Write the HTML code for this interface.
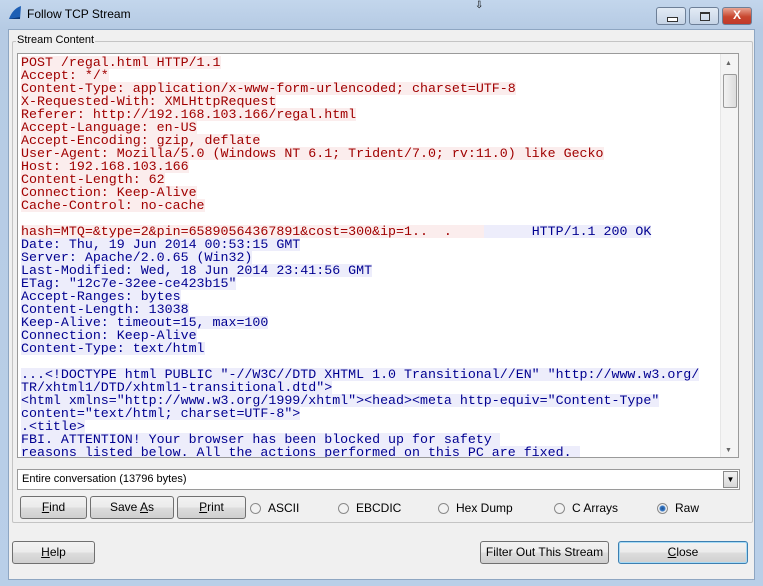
<!DOCTYPE html>
<html><head><style>
body{margin:0;width:763px;height:586px;overflow:hidden;background:#6f97c1;font-family:"Liberation Sans",sans-serif;}
.win{position:absolute;left:0;top:0;width:763px;height:586px;background:linear-gradient(#c3d6ec,#b6cbe4 28px,#b9cfe8);}
.title{position:absolute;left:27px;top:7px;font-size:12px;color:#000;}
.client{position:absolute;left:8px;top:29px;width:745px;height:549px;background:#f0f0f0;border:1px solid #8ea6c2;}
.grp{position:absolute;left:12px;top:41px;width:739px;height:480px;border:1px solid #c4c4c4;border-radius:2px;}
.grplbl{position:absolute;left:16px;top:34px;background:#f0f0f0;font-size:11px;padding:0 1px;}
.text{position:absolute;left:17px;top:53px;width:722px;height:405px;background:#fff;border:1px solid #9a9a9a;box-sizing:border-box;overflow:hidden;}
.lines{position:absolute;left:3px;top:2px;font-family:"Liberation Mono",monospace;font-size:13.3px;line-height:13px;}
.lines div{height:13px;white-space:nowrap;}
.lines span{white-space:pre;}
.r span{background:#fbeded;color:#a00000;display:inline-block;height:13px;}
.b span{background:#ededfb;color:#000090;display:inline-block;height:13px;}
.sb{position:absolute;right:0;top:0;width:17px;height:403px;background:#f4f4f4;border-left:1px solid #e6e6e6;}
.thumb{position:absolute;left:2px;top:20px;width:12px;height:32px;border:1px solid #9a9a9a;border-radius:2px;background:linear-gradient(90deg,#f2f2f2,#dcdcdc);}
.btn{position:absolute;height:23px;border:1px solid #707070;border-radius:3px;background:linear-gradient(#f2f2f2,#ebebeb 50%,#dddddd 51%,#cfcfcf);box-sizing:border-box;font-size:12px;text-align:center;line-height:21px;color:#000;}
.radio{position:absolute;font-size:12px;top:501px;}
.radio i{display:inline-block;width:11px;height:11px;border:1px solid #8a8a8a;border-radius:50%;background:#f2f2f2;vertical-align:-2px;margin-right:7px;box-sizing:border-box;position:relative;}
.combo{position:absolute;left:17px;top:469px;width:723px;height:21px;border:1px solid #9a9a9a;background:#fff;box-sizing:border-box;font-size:11px;line-height:19px;padding-left:4px;}
.cb{position:absolute;right:1px;top:1px;width:15px;height:17px;border:1px solid #8a8a8a;background:linear-gradient(#f2f2f2,#d8d8d8);box-sizing:border-box;font-size:8px;text-align:center;line-height:15px;}
.tb{position:absolute;top:7px;height:18px;border:1px solid #6d7f97;border-radius:3px;box-sizing:border-box;}
</style></head><body>
<div class="win">
<svg style="position:absolute;left:7px;top:5px" width="16" height="16"><path d="M2 14 C4 8 8 3 14 1 L13 14 Z" fill="#1e5fb4"/><path d="M2 14 L13 14 L13 12 Z" fill="#0d3a7a"/></svg>
<div class="title">Follow TCP Stream</div>
<div style="position:absolute;left:475px;top:0;font-size:10px;">⇩</div>
<div class="tb" style="left:656px;width:30px;background:linear-gradient(#e3ebf5,#c6d4e6);"><div style="position:absolute;left:10px;top:9px;width:9px;height:3px;border:1px solid #333;background:#fff;"></div></div>
<div class="tb" style="left:689px;width:30px;background:linear-gradient(#e3ebf5,#c6d4e6);"><div style="position:absolute;left:10px;top:4px;width:8px;height:6px;border:1px solid #333;border-top-width:2px;"></div></div>
<div class="tb" style="left:722px;width:30px;background:linear-gradient(#e8a493,#c8462e 55%,#c0392b);color:#fff;font-weight:bold;font-size:12px;text-align:center;line-height:15px;">X</div>
<div class="client"></div>
<div class="grp"></div>
<div class="grplbl">Stream Content</div>
<div class="text">
<div class="lines">
<div class="r"><span>POST /regal.html HTTP/1.1</span></div>
<div class="r"><span>Accept: */*</span></div>
<div class="r"><span>Content-Type: application/x-www-form-urlencoded; charset=UTF-8</span></div>
<div class="r"><span>X-Requested-With: XMLHttpRequest</span></div>
<div class="r"><span>Referer: http://192.168.103.166/regal.html</span></div>
<div class="r"><span>Accept-Language: en-US</span></div>
<div class="r"><span>Accept-Encoding: gzip, deflate</span></div>
<div class="r"><span>User-Agent: Mozilla/5.0 (Windows NT 6.1; Trident/7.0; rv:11.0) like Gecko</span></div>
<div class="r"><span>Host: 192.168.103.166</span></div>
<div class="r"><span>Content-Length: 62</span></div>
<div class="r"><span>Connection: Keep-Alive</span></div>
<div class="r"><span>Cache-Control: no-cache</span></div>
<div></div>
<div><span class="r"><span>hash=MTQ=&amp;type=2&amp;pin=65890564367891&amp;cost=300&amp;ip=1..  .    </span></span><span class="b"><span>      HTTP/1.1 200 OK</span></span></div>
<div class="b"><span>Date: Thu, 19 Jun 2014 00:53:15 GMT</span></div>
<div class="b"><span>Server: Apache/2.0.65 (Win32)</span></div>
<div class="b"><span>Last-Modified: Wed, 18 Jun 2014 23:41:56 GMT</span></div>
<div class="b"><span>ETag: "12c7e-32ee-ce423b15"</span></div>
<div class="b"><span>Accept-Ranges: bytes</span></div>
<div class="b"><span>Content-Length: 13038</span></div>
<div class="b"><span>Keep-Alive: timeout=15, max=100</span></div>
<div class="b"><span>Connection: Keep-Alive</span></div>
<div class="b"><span>Content-Type: text/html</span></div>
<div></div>
<div class="b"><span>...&lt;!DOCTYPE html PUBLIC "-//W3C//DTD XHTML 1.0 Transitional//EN" "http://www.w3.org/</span></div>
<div class="b"><span>TR/xhtml1/DTD/xhtml1-transitional.dtd"&gt;</span></div>
<div class="b"><span>&lt;html xmlns="http://www.w3.org/1999/xhtml"&gt;&lt;head&gt;&lt;meta http-equiv="Content-Type"</span></div>
<div class="b"><span>content="text/html; charset=UTF-8"&gt;</span></div>
<div class="b"><span>.&lt;title&gt;</span></div>
<div class="b"><span>FBI. ATTENTION! Your browser has been blocked up for safety </span></div>
<div class="b"><span>reasons listed below. All the actions performed on this PC are fixed. </span></div>
<div class="b"><span>All your files are encrypted and locked by the government agencies </span></div>
</div>
<div class="sb"><div style="position:absolute;left:4px;top:6px;font-size:7px;color:#666;">▲</div><div class="thumb"></div><div style="position:absolute;left:4px;bottom:3px;font-size:7px;color:#666;">▼</div></div>
</div>
<div class="combo">Entire conversation (13796 bytes)<div class="cb">▼</div></div>
<div class="btn" style="left:20px;top:496px;width:67px;"><u>F</u>ind</div>
<div class="btn" style="left:90px;top:496px;width:84px;">Save <u>A</u>s</div>
<div class="btn" style="left:177px;top:496px;width:69px;"><u>P</u>rint</div>
<div class="radio" style="left:250px;"><i></i>ASCII</div>
<div class="radio" style="left:338px;"><i></i>EBCDIC</div>
<div class="radio" style="left:438px;"><i></i>Hex Dump</div>
<div class="radio" style="left:554px;"><i></i>C Arrays</div>
<div class="radio" style="left:657px;"><i style="background:radial-gradient(circle,#1a4f8f 0,#3a7bc8 2.5px,#f2f2f2 3.5px);"></i>Raw</div>
<div class="btn" style="left:12px;top:541px;width:83px;"><u>H</u>elp</div>
<div class="btn" style="left:480px;top:541px;width:129px;">Filter Out This Stream</div>
<div class="btn" style="left:618px;top:541px;width:130px;border-color:#3c7fb1;box-shadow:inset 0 0 0 1px #a6daf5;"><u>C</u>lose</div>
</div>
</body></html>
